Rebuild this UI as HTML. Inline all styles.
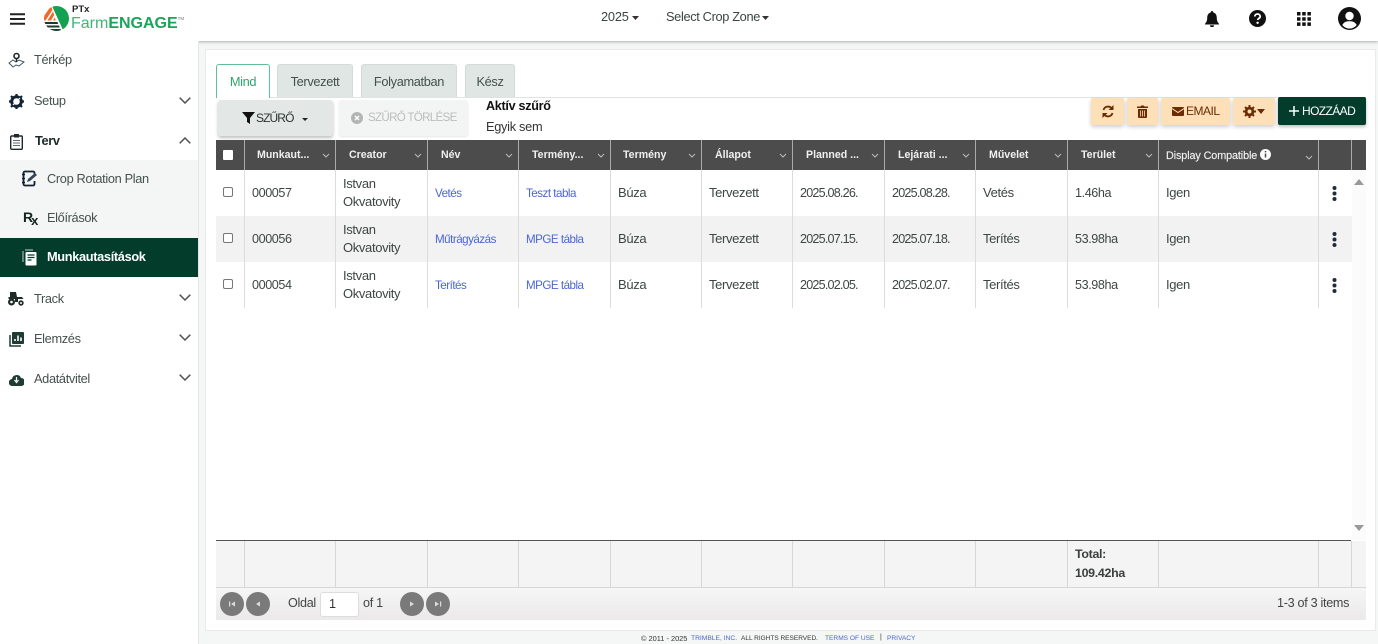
<!DOCTYPE html>
<html><head><meta charset="utf-8"><style>
*{box-sizing:border-box}
html,body{margin:0;width:1378px;height:644px;overflow:hidden;background:#f5f7f6;font-family:"Liberation Sans",sans-serif;color:#3c4544;font-size:12px}
.a{position:absolute;white-space:nowrap}
#top{position:absolute;left:0;top:0;width:1378px;height:41px;background:#fff;box-shadow:0 1px 3px rgba(0,0,0,.3)}
#side{position:absolute;left:0;top:41px;width:199px;height:603px;background:#fff;border-right:1px solid #e3e6e5}
.m{font-size:12.8px;letter-spacing:-.35px;color:#45524f}
.chev{position:absolute;left:179px;width:12px;height:7px}
.tab{position:absolute;top:64px;height:33px;background:#e0e6e3;border:1px solid #d3dcd8;border-bottom:0;border-radius:3px 3px 0 0;text-align:center;line-height:33px;font-size:12.8px;letter-spacing:-.35px;color:#44504d}
.hd{position:absolute;top:140px;height:30px;background:#4c4c4c;border-right:1px solid #aaa;color:#f0f0f0;font-size:10.6px;font-weight:bold;line-height:30px}
.hd span{position:absolute;top:0}
.hd svg{position:absolute;top:13px;right:5px}
.c{position:absolute;border-right:1px solid #dcdcdc;height:46px;padding:14px 0 0 7px;font-size:13px;letter-spacing:-.35px;color:#3e4645;line-height:18px}
.two{padding-top:5px}
.n{font-size:12.6px;letter-spacing:-.4px}
.d{font-size:12.6px;letter-spacing:-.8px}
.l{color:#4a66d6;font-size:11.6px;letter-spacing:-.5px;padding-top:15px}
.f{position:absolute;top:541px;height:46px;background:#f4f4f4;border-right:1px solid #d6d6d6}
.o{position:absolute;top:98px;height:27px;background:#fde0b8;border-radius:2px;box-shadow:0 2px 4px rgba(0,0,0,.2)}
.pg{position:absolute;top:592px;width:24px;height:24px;border-radius:50%;background:#7a7a7a}
.pg svg{position:absolute;left:7px;top:7px}
.ft{position:absolute;top:634px;white-space:nowrap;color:#333}
</style></head><body>
<div id="top">
<svg class="a" style="left:10px;top:13px" width="16" height="12"><path d="M0 1.200h15M0 6h15M0 10.800h15" stroke="#222" stroke-width="2"/></svg>
<svg class="a" style="left:44px;top:6px" width="25" height="25" viewBox="0 0 25 25"><defs><clipPath id="k"><circle cx="12.500" cy="12.500" r="12.500"/></clipPath></defs><g clip-path="url(#k)"><path d="M8 0H25V25H19.500Z" fill="#12a150"/><path d="M0 10L7 0l1.500 4L1.500 14.500H0zM3.500 14.500L9 5.500l1.200 3.500-3.200 5.500zM9 14.500l1.800-3 1 3z" fill="#ef6a2c"/><path d="M0 16h13.500l.7 2H0zM0 19.500h15l.8 2H0zM0 23h16.500l.8 2H0z" fill="#1c3b2c"/></g></svg>
<div class="a" style="left:72px;top:4px;font-size:9.5px;font-weight:bold;color:#222">PTx</div>
<div class="a" style="left:71px;top:15px;font-size:16px;color:#1aa558"><span style="font-weight:normal;color:#3db877">Farm</span><b>ENGAGE</b><sup style="font-size:4.500px;vertical-align:8px;color:#777">TM</sup></div>
<div class="a" style="left:601px;top:9px;font-size:12.8px;letter-spacing:-.2px">2025</div>
<svg class="a" style="left:632px;top:16px" width="7" height="4"><path d="M0 0h7L3.500 4z" fill="#333"/></svg>
<div class="a" style="left:666px;top:9px;font-size:12.8px;letter-spacing:-.35px">Select Crop Zone</div>
<svg class="a" style="left:762px;top:16px" width="7" height="4"><path d="M0 0h7L3.500 4z" fill="#333"/></svg>
<svg class="a" style="left:1205px;top:11px" width="14" height="16" viewBox="0 0 14 16"><path d="M7 0a1.300 1.300 0 0 1 1.300 1.500C11 2.200 11.800 4.500 11.800 7c0 3 1 4.500 2.200 5.800V13.500H0v-.7C1.200 11.500 2.200 10 2.200 7c0-2.500.8-4.800 3.500-5.500A1.300 1.300 0 0 1 7 0zM5 14.300h4a2 2 0 0 1-4 0z" fill="#111"/></svg>
<svg class="a" style="left:1249px;top:10px" width="17" height="17" viewBox="0 0 17 17"><circle cx="8.500" cy="8.500" r="8.500" fill="#111"/><path d="M5.800 6.500c0-3.300 5.400-3.300 5.400 0 0 2-2.500 1.800-2.500 3.500" stroke="#fff" stroke-width="1.800" fill="none"/><circle cx="8.600" cy="12.800" r="1.200" fill="#fff"/></svg>
<svg class="a" style="left:1297px;top:12px" width="14" height="14"><path d="M0 0h3.500v3.500H0zM5.200 0h3.500v3.500H5.200zM10.400 0h3.500v3.500h-3.500zM0 5.200h3.500v3.500H0zM5.200 5.200h3.500v3.500H5.200zM10.400 5.200h3.500v3.500h-3.500zM0 10.400h3.500v3.500H0zM5.200 10.400h3.500v3.500H5.200zM10.400 10.400h3.500v3.500h-3.500z" fill="#111"/></svg>
<svg class="a" style="left:1338px;top:7px" width="23" height="23" viewBox="0 0 23 23"><circle cx="11.500" cy="11.500" r="11.500" fill="#111"/><circle cx="11.500" cy="9" r="4.200" fill="#fff"/><path d="M4.300 18c1.500-3 4-3.800 7.200-3.800s5.700.8 7.200 3.800a9 9 0 0 1-14.400 0z" fill="#fff"/></svg>
</div>
<div id="side">
<div class="a" style="left:0;top:119px;width:198px;height:78px;background:#f4f6f5"></div>
<div class="a" style="left:0;top:197px;width:198px;height:39px;background:#033c2a"></div>
<div class="a m" style="left:34px;top:11px">Térkép</div>
<div class="a m" style="left:34px;top:52px">Setup</div>
<div class="a m" style="left:35px;top:92px;font-weight:bold;color:#1e2b28">Terv</div>
<div class="a m" style="left:47px;top:130px">Crop Rotation Plan</div>
<div class="a m" style="left:47px;top:169px">Előírások</div>
<div class="a m" style="left:47px;top:208px;font-weight:bold;color:#fff">Munkautasítások</div>
<div class="a m" style="left:34px;top:250px">Track</div>
<div class="a m" style="left:34px;top:290px">Elemzés</div>
<div class="a m" style="left:34px;top:330px">Adatátvitel</div>
<svg class="chev" style="top:56px" viewBox="0 0 12 7"><path d="M.7.700L6 6l5.300-5.300" stroke="#555" stroke-width="1.500" fill="none"/></svg>
<svg class="chev" style="top:96px" viewBox="0 0 12 7"><path d="M.7 6.300L6 1l5.300 5.300" stroke="#555" stroke-width="1.500" fill="none"/></svg>
<svg class="chev" style="top:253px" viewBox="0 0 12 7"><path d="M.7.700L6 6l5.300-5.300" stroke="#555" stroke-width="1.500" fill="none"/></svg>
<svg class="chev" style="top:293px" viewBox="0 0 12 7"><path d="M.7.700L6 6l5.300-5.300" stroke="#555" stroke-width="1.500" fill="none"/></svg>
<svg class="chev" style="top:333px" viewBox="0 0 12 7"><path d="M.7.700L6 6l5.300-5.300" stroke="#555" stroke-width="1.500" fill="none"/></svg>
<svg class="a" style="left:8px;top:11px" width="17" height="16" viewBox="0 0 17 16"><path d="M1 11l4-3 3 2 3-2 5 2-5 4-3-1-3 2z" fill="none" stroke="#456" stroke-width="1"/><circle cx="8.500" cy="4" r="2.500" fill="none" stroke="#1e2b28" stroke-width="1.600"/><path d="M8.500 6.500V10" stroke="#1e2b28" stroke-width="1.500"/></svg>
<svg class="a" style="left:9px;top:53px" width="15" height="15" viewBox="0 0 15 15"><circle cx="7.500" cy="7.500" r="4.800" fill="none" stroke="#123" stroke-width="3"/><path d="M7.500 0v3M7.500 12v3M0 7.500h3M12 7.500h3M2 2l2 2M11 11l2 2M13 2l-2 2M4 11l-2 2" stroke="#123" stroke-width="2.200"/><path d="M4 11l7-7" stroke="#fff" stroke-width="1.200"/></svg>
<svg class="a" style="left:10px;top:93px" width="13" height="16" viewBox="0 0 13 16"><rect x=".7" y="2" width="11.600" height="13.300" rx="1" fill="none" stroke="#1e2b28" stroke-width="1.400"/><rect x="4" y="0" width="5" height="3.500" fill="#1e2b28"/><path d="M3 6.500h7M3 9h7M3 11.500h7" stroke="#667" stroke-width="1"/></svg>
<svg class="a" style="left:21px;top:129px" width="17" height="17" viewBox="0 0 17 17"><path d="M4 1.500h8a1.500 1.500 0 0 1 1.500 1.500v2M13.500 11v3a1.500 1.500 0 0 1-1.500 1.500H4A1.500 1.500 0 0 1 2.500 14V3A1.500 1.500 0 0 1 4 1.500" fill="none" stroke="#123" stroke-width="1.800"/><path d="M1 4.500h3M1 8.500h3M1 12.500h3" stroke="#123" stroke-width="1.400"/><path d="M6 12l1-3 7-6 2 2-7 6z" fill="#345"/></svg>
<div class="a" style="left:23px;top:168px;font-size:14px;font-weight:bold;color:#13231f">R<span style="font-size:13px;margin-left:-2px;position:relative;top:3px">x</span></div>
<svg class="a" style="left:22px;top:208px" width="15" height="17" viewBox="0 0 15 17"><path d="M3 1h8M1 2v11" stroke="#9fb5ad" stroke-width="1.200" fill="none"/><rect x="3.500" y="3" width="11" height="13.500" rx="1" fill="#fff"/><path d="M5.500 6h7M5.500 8.500h7M5.500 11h4" stroke="#033c2a" stroke-width="1.300"/></svg>
<svg class="a" style="left:7px;top:250px" width="18" height="15" viewBox="0 0 18 15"><path d="M3 1h6l1 5h5l1.500 2H1.500V6H3z" fill="#1e2b28"/><circle cx="4.500" cy="11" r="3.500" fill="#1e2b28"/><circle cx="4.500" cy="11" r="1.300" fill="#fff"/><circle cx="14" cy="12" r="2.700" fill="#1e2b28"/><circle cx="14" cy="12" r="1" fill="#fff"/><path d="M8 8h3v3H8z" fill="#1e2b28"/></svg>
<svg class="a" style="left:9px;top:291px" width="15" height="15" viewBox="0 0 15 15"><rect x="3" y="0" width="12" height="12" rx="1" fill="#1e3b34"/><path d="M1 3v11h11" fill="none" stroke="#1e3b34" stroke-width="1.500"/><path d="M6 9V7M9 9V3.500M12 9V5.500" stroke="#fff" stroke-width="1.600"/></svg>
<svg class="a" style="left:9px;top:333px" width="15" height="12" viewBox="0 0 15 12"><path d="M3.500 12A3.500 3.500 0 0 1 3 5a4.700 4.700 0 0 1 9-1 4 4 0 0 1 0 8z" fill="#1e3b34"/><path d="M7.500 3v4M5.500 6L7.500 8.500 9.500 6" stroke="#fff" stroke-width="1.200" fill="none"/></svg>
</div>

<div class="a" style="left:205px;top:49px;width:1171px;height:582px;background:#fff;border:1px solid #e8ebea"></div>
<div class="a" style="left:216px;top:97px;width:1150px;height:1px;background:#dfe3e2"></div>
<div class="tab" style="left:216px;width:54px;background:#fff;border:1px solid #5dc096;border-bottom:0;color:#2fa36f;height:34px;z-index:2">Mind</div>
<div class="tab" style="left:277px;width:76px">Tervezett</div>
<div class="tab" style="left:361px;width:96px">Folyamatban</div>
<div class="tab" style="left:465px;width:50px">Kész</div>

<div class="a" style="left:218px;top:100px;width:115px;height:36px;background:#e3e8e6;border-radius:3px;box-shadow:0 2px 3px rgba(0,0,0,.25)"></div>
<svg class="a" style="left:242px;top:112px" width="13" height="12"><path d="M0 0h13L8 6v6L5 10V6z" fill="#111"/></svg>
<div class="a" style="left:256px;top:111px;font-size:12px;letter-spacing:-.9px;color:#2c3432">SZŰRŐ</div>
<svg class="a" style="left:302px;top:118px" width="6" height="3"><path d="M0 0h6L3 3z" fill="#222"/></svg>
<div class="a" style="left:339px;top:100px;width:129px;height:36px;background:#f3f5f4;border-radius:3px;box-shadow:0 1px 2px rgba(0,0,0,.1)"></div>
<svg class="a" style="left:351px;top:112px" width="12" height="12"><circle cx="6" cy="6" r="6" fill="#b4b4b4"/><path d="M4 4l4 4M8 4l-4 4" stroke="#fff" stroke-width="1.400"/></svg>
<div class="a" style="left:368px;top:111px;font-size:11.6px;letter-spacing:-.7px;color:#b9bdbc">SZŰRŐ TÖRLÉSE</div>
<div class="a" style="left:486px;top:99px;font-size:12.6px;letter-spacing:-.3px;font-weight:bold;color:#111">Aktív szűrő</div>
<div class="a" style="left:486px;top:119px;font-size:12.8px;letter-spacing:-.3px;color:#333">Egyik sem</div>

<div class="o" style="left:1091px;width:33px"></div>
<svg class="a" style="left:1102px;top:105px" width="12" height="13" viewBox="0 0 12 13"><path d="M1.500 5A4.700 4.700 0 0 1 9.800 3.500M10.500 8A4.700 4.700 0 0 1 2.200 9.500" stroke="#6b2c05" stroke-width="1.800" fill="none"/><path d="M11.500 0v5h-5zM.5 13V8h5z" fill="#6b2c05"/></svg>
<div class="o" style="left:1127px;width:31px"></div>
<svg class="a" style="left:1137px;top:105px" width="11" height="13" viewBox="0 0 11 13"><path d="M0 1.500h3.500L4.200.5h2.600l.7 1H11V3H0zM1 4h9v8a1 1 0 0 1-1 1H2a1 1 0 0 1-1-1z" fill="#6b2c05"/><path d="M3.500 5.500v6M5.500 5.500v6M7.500 5.500v6" stroke="#fde0b8" stroke-width=".8"/></svg>
<div class="o" style="left:1161px;width:69px"></div>
<svg class="a" style="left:1172px;top:107px" width="12" height="9" viewBox="0 0 12 9"><rect width="12" height="9" rx="1" fill="#6b2c05"/><path d="M0 1.500L6 5.500 12 1.500" stroke="#fde0b8" stroke-width="1" fill="none"/></svg>
<div class="a" style="left:1186px;top:104px;font-size:12px;letter-spacing:-.5px;color:#6b2c05">EMAIL</div>
<div class="o" style="left:1233px;width:42px"></div>
<svg class="a" style="left:1243px;top:105px" width="13" height="13" viewBox="0 0 13 13"><circle cx="6.500" cy="6.500" r="3.400" fill="none" stroke="#6b2c05" stroke-width="2.800"/><path d="M6.500 0v3M6.500 10v3M0 6.500h3M10 6.500h3M2 2l2 2M9 9l2 2M11 2L9 4M4 9l-2 2" stroke="#6b2c05" stroke-width="2"/></svg>
<svg class="a" style="left:1257px;top:109px" width="8" height="5"><path d="M0 0h8L4 5z" fill="#6b2c05"/></svg>
<div class="a" style="left:1278px;top:97px;width:88px;height:28px;background:#033c2a;border-radius:2px;box-shadow:0 2px 3px rgba(0,0,0,.25)"></div>
<svg class="a" style="left:1289px;top:106px" width="10" height="10"><path d="M5 0v10M0 5h10" stroke="#fff" stroke-width="1.500"/></svg>
<div class="a" style="left:1302px;top:104px;font-size:12px;letter-spacing:-.6px;color:#fff">HOZZÁAD</div>

<!-- header -->
<div class="a" style="left:216px;top:140px;width:1150px;height:30px;background:#4c4c4c"></div>
<div class="hd" style="left:216px;width:29px"></div>
<div class="a" style="left:223px;top:150px;width:10px;height:10px;background:#fff;border-radius:1px"></div>
<div class="hd" style="left:245px;width:91px"><span style="left:12px">Munkaut...</span><svg width="8" height="5"><path d="M1 1l3 3 3-3" stroke="#bbb" fill="none"/></svg></div>
<div class="hd" style="left:336px;width:92px"><span style="left:13px">Creator</span><svg width="8" height="5"><path d="M1 1l3 3 3-3" stroke="#bbb" fill="none"/></svg></div>
<div class="hd" style="left:428px;width:91px"><span style="left:13px">Név</span><svg width="8" height="5"><path d="M1 1l3 3 3-3" stroke="#bbb" fill="none"/></svg></div>
<div class="hd" style="left:519px;width:92px"><span style="left:13px">Termény...</span><svg width="8" height="5"><path d="M1 1l3 3 3-3" stroke="#bbb" fill="none"/></svg></div>
<div class="hd" style="left:611px;width:91px"><span style="left:12px">Termény</span><svg width="8" height="5"><path d="M1 1l3 3 3-3" stroke="#bbb" fill="none"/></svg></div>
<div class="hd" style="left:702px;width:91px"><span style="left:13px">Állapot</span><svg width="8" height="5"><path d="M1 1l3 3 3-3" stroke="#bbb" fill="none"/></svg></div>
<div class="hd" style="left:793px;width:92px"><span style="left:13px">Planned ...</span><svg width="8" height="5"><path d="M1 1l3 3 3-3" stroke="#bbb" fill="none"/></svg></div>
<div class="hd" style="left:885px;width:91px"><span style="left:13px">Lejárati ...</span><svg width="8" height="5"><path d="M1 1l3 3 3-3" stroke="#bbb" fill="none"/></svg></div>
<div class="hd" style="left:976px;width:92px"><span style="left:13px">Művelet</span><svg width="8" height="5"><path d="M1 1l3 3 3-3" stroke="#bbb" fill="none"/></svg></div>
<div class="hd" style="left:1068px;width:91px"><span style="left:13px">Terület</span><svg width="8" height="5"><path d="M1 1l3 3 3-3" stroke="#bbb" fill="none"/></svg></div>
<div class="hd" style="left:1159px;width:160px"><span style="left:7px;font-weight:normal;top:.5px;font-size:10.8px;letter-spacing:-.1px;-webkit-text-stroke:.15px #f0f0f0">Display Compatible</span><svg style="top:15px" width="8" height="5"><path d="M1 1l3 3 3-3" stroke="#bbb" fill="none"/></svg></div>
<svg class="a" style="left:1260px;top:149px" width="11" height="11"><circle cx="5.500" cy="5.500" r="5.500" fill="#fff"/><path d="M5.500 4.500v4M5.500 2v1.400" stroke="#4c4c4c" stroke-width="1.500"/></svg>
<div class="hd" style="left:1319px;width:33px"></div>

<!-- rows -->
<div class="a" style="left:216px;top:216px;width:1136px;height:46px;background:#f2f2f2"></div>
<div class="a" style="left:1352px;top:170px;width:14px;height:370px;background:#fbfbfb"></div>
<svg class="a" style="left:1354px;top:179px" width="10" height="6"><path d="M0 6L5 0l5 6z" fill="#999"/></svg>
<svg class="a" style="left:1354px;top:525px" width="10" height="6"><path d="M0 0l5 6 5-6z" fill="#999"/></svg>

<!-- ROW1 -->
<div class="c" style="left:216px;top:170px;width:29px"></div>
<div class="a" style="left:223px;top:187px;width:10px;height:10px;background:#fff;border:1px solid #777;border-radius:2px"></div>
<div class="c n" style="left:245px;top:170px;width:91px">000057</div>
<div class="c two" style="left:336px;top:170px;width:92px">Istvan<br>Okvatovity</div>
<div class="c l" style="left:428px;top:170px;width:91px">Vetés</div>
<div class="c l" style="left:519px;top:170px;width:92px">Teszt tabla</div>
<div class="c" style="left:611px;top:170px;width:91px">Búza</div>
<div class="c" style="left:702px;top:170px;width:91px">Tervezett</div>
<div class="c d" style="left:793px;top:170px;width:92px">2025.08.26.</div>
<div class="c d" style="left:885px;top:170px;width:91px">2025.08.28.</div>
<div class="c" style="left:976px;top:170px;width:92px">Vetés</div>
<div class="c n" style="left:1068px;top:170px;width:91px">1.46ha</div>
<div class="c" style="left:1159px;top:170px;width:160px">Igen</div>
<svg class="a" style="left:1332px;top:186px" width="5" height="15"><circle cx="2.500" cy="2" r="2" fill="#222b3a"/><circle cx="2.500" cy="7.500" r="2" fill="#222b3a"/><circle cx="2.500" cy="13" r="2" fill="#222b3a"/></svg>

<!-- ROW2 -->
<div class="c" style="left:216px;top:216px;width:29px"></div>
<div class="a" style="left:223px;top:233px;width:10px;height:10px;background:#fff;border:1px solid #777;border-radius:2px"></div>
<div class="c n" style="left:245px;top:216px;width:91px">000056</div>
<div class="c two" style="left:336px;top:216px;width:92px">Istvan<br>Okvatovity</div>
<div class="c l" style="left:428px;top:216px;width:91px">Műtrágyázás</div>
<div class="c l" style="left:519px;top:216px;width:92px">MPGE tábla</div>
<div class="c" style="left:611px;top:216px;width:91px">Búza</div>
<div class="c" style="left:702px;top:216px;width:91px">Tervezett</div>
<div class="c d" style="left:793px;top:216px;width:92px">2025.07.15.</div>
<div class="c d" style="left:885px;top:216px;width:91px">2025.07.18.</div>
<div class="c" style="left:976px;top:216px;width:92px">Terítés</div>
<div class="c n" style="left:1068px;top:216px;width:91px">53.98ha</div>
<div class="c" style="left:1159px;top:216px;width:160px">Igen</div>
<svg class="a" style="left:1332px;top:232px" width="5" height="15"><circle cx="2.500" cy="2" r="2" fill="#222b3a"/><circle cx="2.500" cy="7.500" r="2" fill="#222b3a"/><circle cx="2.500" cy="13" r="2" fill="#222b3a"/></svg>

<!-- ROW3 -->
<div class="c" style="left:216px;top:262px;width:29px"></div>
<div class="a" style="left:223px;top:279px;width:10px;height:10px;background:#fff;border:1px solid #777;border-radius:2px"></div>
<div class="c n" style="left:245px;top:262px;width:91px">000054</div>
<div class="c two" style="left:336px;top:262px;width:92px">Istvan<br>Okvatovity</div>
<div class="c l" style="left:428px;top:262px;width:91px">Terítés</div>
<div class="c l" style="left:519px;top:262px;width:92px">MPGE tábla</div>
<div class="c" style="left:611px;top:262px;width:91px">Búza</div>
<div class="c" style="left:702px;top:262px;width:91px">Tervezett</div>
<div class="c d" style="left:793px;top:262px;width:92px">2025.02.05.</div>
<div class="c d" style="left:885px;top:262px;width:91px">2025.02.07.</div>
<div class="c" style="left:976px;top:262px;width:92px">Terítés</div>
<div class="c n" style="left:1068px;top:262px;width:91px">53.98ha</div>
<div class="c" style="left:1159px;top:262px;width:160px">Igen</div>
<svg class="a" style="left:1332px;top:278px" width="5" height="15"><circle cx="2.500" cy="2" r="2" fill="#222b3a"/><circle cx="2.500" cy="7.500" r="2" fill="#222b3a"/><circle cx="2.500" cy="13" r="2" fill="#222b3a"/></svg>

<!-- footer -->
<div class="a" style="left:216px;top:540px;width:1135px;height:1px;background:#555"></div>
<div class="a" style="left:216px;top:541px;width:1150px;height:46px;background:#f4f4f4"></div>
<div class="f" style="left:216px;width:29px"></div>
<div class="f" style="left:245px;width:91px"></div>
<div class="f" style="left:336px;width:92px"></div>
<div class="f" style="left:428px;width:91px"></div>
<div class="f" style="left:519px;width:92px"></div>
<div class="f" style="left:611px;width:91px"></div>
<div class="f" style="left:702px;width:91px"></div>
<div class="f" style="left:793px;width:92px"></div>
<div class="f" style="left:885px;width:91px"></div>
<div class="f" style="left:976px;width:92px"></div>
<div class="f" style="left:1068px;width:91px"></div>
<div class="f" style="left:1159px;width:160px"></div>
<div class="f" style="left:1319px;width:33px"></div>
<div class="a" style="left:1075px;top:545px;font-size:12.4px;letter-spacing:-.3px;font-weight:bold;line-height:19px;color:#3a3f3e">Total:<br>109.42ha</div>

<!-- pager -->
<div class="a" style="left:216px;top:587px;width:1150px;height:33px;background:linear-gradient(#f6f6f6,#ebe9e9);border-top:1px solid #d6d6d6"></div>
<div class="pg" style="left:220px"><svg width="10" height="10"><path d="M2 2.500h1.200v5H2zM8 2.500v5L4 5z" fill="#ddd"/></svg></div>
<div class="pg" style="left:246px"><svg width="10" height="10"><path d="M7 2.500v5L3 5z" fill="#ddd"/></svg></div>
<div class="pg" style="left:400px"><svg width="10" height="10"><path d="M3 2.500v5L7 5z" fill="#ddd"/></svg></div>
<div class="pg" style="left:426px"><svg width="10" height="10"><path d="M2 2.500v5L6 5zM7 2.500h1.200v5H7z" fill="#ddd"/></svg></div>
<div class="a" style="left:288px;top:596px;font-size:12.6px;letter-spacing:-.3px;color:#444">Oldal</div>
<div class="a" style="left:320px;top:592px;width:39px;height:25px;background:#fff;border:1px solid #ddd;border-radius:3px;padding:4px 0 0 8px;font-size:12.6px;color:#333">1</div>
<div class="a" style="left:363px;top:596px;font-size:12.6px;letter-spacing:-.3px;color:#444">of 1</div>
<div class="a" style="left:1277px;top:596px;font-size:12.6px;letter-spacing:-.3px;color:#444">1-3 of 3 items</div>

<div class="ft" style="left:641px;font-size:7.4px">© 2011 - 2025</div>
<div class="ft" style="left:691px;font-size:6.7px;color:#4a66d6;top:635px">TRIMBLE, INC.</div>
<div class="ft" style="left:741px;font-size:6.5px;top:635px">ALL RIGHTS RESERVED.</div>
<div class="ft" style="left:825px;font-size:6.6px;color:#4a66d6;top:635px">TERMS OF USE</div>
<div class="ft" style="left:880px;font-size:7px;top:634px">|</div>
<div class="ft" style="left:887px;font-size:6.6px;color:#4a66d6;top:635px">PRIVACY</div>
</body></html>
